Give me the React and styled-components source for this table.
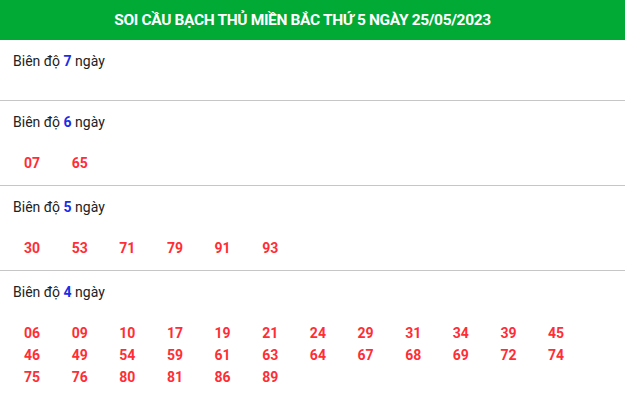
import styled, { createGlobalStyle } from "styled-components";

const GlobalStyle = createGlobalStyle`
    body {
        margin: 0;
        background: #fff;
        font-family: Roboto, "Liberation Sans", Arial, sans-serif;
    }
`;

const SECTIONS = [
    { days: 7, numbers: [] },
    { days: 6, numbers: ["07", "65"] },
    { days: 5, numbers: ["30", "53", "71", "79", "91", "93"] },
    {
        days: 4,
        numbers: [
            "06", "09", "10", "17", "19", "21", "24", "29", "31", "34", "39", "45",
            "46", "49", "54", "59", "61", "63", "64", "67", "68", "69", "72", "74",
            "75", "76", "80", "81", "86", "89",
        ],
    },
];

const Wrapper = styled.div`
    width: 625px;
`;

const Header = styled.h2`
    margin: 0;
    height: 40px;
    padding-right: 20px;
    display: flex;
    align-items: center;
    justify-content: center;
    background: #00aa34;
    color: #fff;
    font-size: 15.5px;
    font-weight: 700;
    letter-spacing: -0.35px;
    text-transform: uppercase;
`;

const Section = styled.div`
    padding: 11px 13px 11px;
    border-bottom: 1px solid #c6c6c6;
`;

const Title = styled.div`
    font-size: 14px;
    line-height: 20px;
    color: #222;
`;

const Days = styled.strong`
    color: #1a2ee8;
    font-weight: 700;
`;

const NumberList = styled.div`
    padding-top: ${({ $empty }) => ($empty ? "18px" : "20px")};
    display: grid;
    grid-template-columns: repeat(12, 47.65px);
`;

const Num = styled.span`
    padding-left: 11px;
    font-size: 14px;
    line-height: 22px;
    font-weight: 700;
    color: #ff2d35;
`;

export default function App() {
    return (
        <Wrapper>
            <GlobalStyle />
            <Header>Soi cầu bạch thủ miền Bắc thứ 5 ngày 25/05/2023</Header>
            {SECTIONS.map(section => (
                <Section key={section.days}>
                    <Title>
                        Biên độ <Days>{section.days}</Days> ngày
                    </Title>
                    <NumberList $empty={section.numbers.length === 0}>
                        {section.numbers.map(n => (
                            <Num key={n}>{n}</Num>
                        ))}
                    </NumberList>
                </Section>
            ))}
        </Wrapper>
    );
}
